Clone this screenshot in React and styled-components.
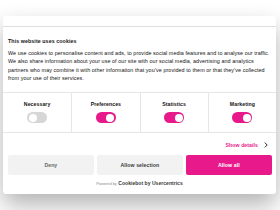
import React from 'react';
import styled, { createGlobalStyle } from 'styled-components';

const pink = '#e8198b';

const GlobalStyle = createGlobalStyle`
	html, body {
		margin: 0;
		padding: 0;
		background: #ffffff;
	}
	body {
		font-family: "Liberation Sans", Arial, sans-serif;
		color: #141414;
	}
`;

const Page = styled.div`
	width: 280px;
	height: 210px;
	padding: 16px 0 0 3px;
	box-sizing: border-box;
	overflow: hidden;
`;

const Dialog = styled.div`
	width: 273px;
	height: 178px;
	background: #ffffff;
	border-radius: 3px;
	box-shadow: 0 11px 23px rgba(0, 0, 0, 0.3);
	display: flex;
	flex-direction: column;
`;

const Header = styled.div`
	height: 10px;
	border-bottom: 1px solid #dedede;
	flex-shrink: 0;
`;

const Intro = styled.div`
	padding: 10.3px 4.5px 9.5px 5px;
`;

const Title = styled.h2`
	margin: 0 0 3.2px 0;
	font-size: 5.3px;
	line-height: 8.4px;
	font-weight: 700;
	letter-spacing: 0.08px;
	color: #141414;
`;

const Text = styled.p`
	margin: 0;
	font-size: 5.4px;
	line-height: 8.4px;
	letter-spacing: 0.07px;
	color: #141414;
`;

const Levels = styled.div`
	display: grid;
	grid-template-columns: repeat(4, 1fr);
	border-top: 1px solid #e6e6e6;
	border-bottom: 1px solid #e6e6e6;
`;

const Level = styled.label`
	display: flex;
	flex-direction: column;
	align-items: center;
	gap: 3.7px;
	padding: 7px 0 9px 0;
	border-left: ${ p => p.first ? 'none' : '1px solid #e6e6e6' };
	font-size: 5.2px;
	line-height: 8.4px;
	font-weight: 700;
	letter-spacing: 0.06px;
	color: #141414;
`;

const Switch = styled.span`
	position: relative;
	display: block;
	width: 20px;
	height: 11px;
	border-radius: 6px;
	background: ${ p => p.on ? pink : '#d6d6d6' };

	&::after {
		content: "";
		position: absolute;
		top: 1.6px;
		left: ${ p => p.on ? '10.6px' : '1.6px' };
		width: 7.8px;
		height: 7.8px;
		border-radius: 50%;
		background: #ffffff;
	}
`;

const DetailsRow = styled.div`
	display: flex;
	justify-content: flex-end;
	align-items: center;
	gap: 6px;
	padding: 8px 8px 0 0;
	height: 8.4px;
`;

const DetailsLink = styled.a`
	font-size: 5.2px;
	line-height: 8.4px;
	font-weight: 700;
	letter-spacing: 0.06px;
	color: ${ pink };
	text-decoration: none;
`;

const Buttons = styled.div`
	display: grid;
	grid-template-columns: repeat(3, 1fr);
	gap: 3.3px;
	margin: 5px 4.3px 0 5px;
`;

const Button = styled.button`
	height: 20.4px;
	border: none;
	border-radius: 2px;
	padding: 0;
	font-family: "Liberation Sans", Arial, sans-serif;
	font-size: 5.2px;
	font-weight: 700;
	letter-spacing: 0.06px;
	background: ${ p => p.primary ? pink : '#f2f2f2' };
	color: ${ p => p.primary ? '#ffffff' : p.muted ? '#6a6a6a' : '#3c3c3c' };
`;

const Powered = styled.div`
	display: flex;
	justify-content: center;
	align-items: baseline;
	gap: 1.5px;
	margin-top: 4.5px;
	line-height: 8.4px;
	color: #141414;

	span {
		font-size: 3.9px;
		color: #8a8a8a;
	}
	b {
		font-size: 5.1px;
		font-weight: 700;
		color: #3a3a3a;
	}
`;

const levels = [
	{ name: 'Necessary', on: false },
	{ name: 'Preferences', on: true },
	{ name: 'Statistics', on: true },
	{ name: 'Marketing', on: true },
];

export default function App () {
	return (
		<Page>
			<GlobalStyle />
			<Dialog>
				<Header />
				<Intro>
					<Title>This website uses cookies</Title>
					<Text>
						We use cookies to personalise content and ads, to provide social media features and to analyse our traffic. We also share information about your use of our site with our social media, advertising and analytics partners who may combine it with other information that you’ve provided to them or that they’ve collected from your use of their services.
					</Text>
				</Intro>
				<Levels>
					{ levels.map( ( l, i ) => (
						<Level key={ l.name } first={ i === 0 }>
							{ l.name }
							<Switch on={ l.on } />
						</Level>
					) ) }
				</Levels>
				<DetailsRow>
					<DetailsLink href="#">Show details</DetailsLink>
					<svg width="4" height="6" viewBox="0 0 4 6">
						<path d="M0.8 0.6 L3.2 3 L0.8 5.4" fill="none" stroke="#141414" strokeWidth="0.9" />
					</svg>
				</DetailsRow>
				<Buttons>
					<Button muted>Deny</Button>
					<Button>Allow selection</Button>
					<Button primary>Allow all</Button>
				</Buttons>
				<Powered>
					<span>Powered by</span>
					<b>Cookiebot by Usercentrics</b>
				</Powered>
			</Dialog>
		</Page>
	);
}
